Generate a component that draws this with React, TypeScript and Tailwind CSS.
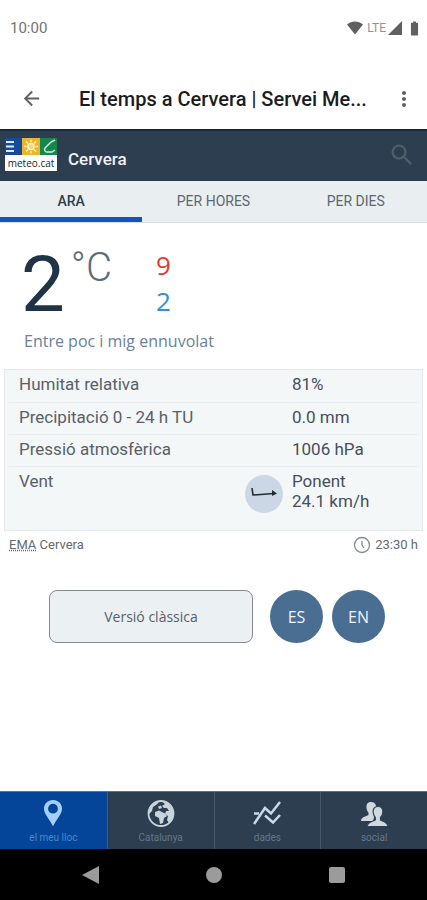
import { MdArrowBack, MdMoreVert, MdSearch, MdBatteryFull } from "react-icons/md";

const tabs = ["ARA", "PER HORES", "PER DIES"];

const readings = [
  { label: "Humitat relativa", value: "81%" },
  { label: "Precipitació 0 - 24 h TU", value: "0.0 mm" },
  { label: "Pressió atmosfèrica", value: "1006 hPa" },
];

const sections = [
  { label: "el meu lloc", icon: <PinIcon /> },
  { label: "Catalunya", icon: <GlobeIcon /> },
  { label: "dades", icon: <ChartIcon /> },
  { label: "social", icon: <PeopleIcon /> },
];

function PinIcon() {
  return (
    <svg viewBox="0 0 28 28" className="h-7 w-7" fill="#a3d0fa">
      <path
        fillRule="evenodd"
        d="M14 0C8.800 0 5 3.800 5 8.700C5 14 10.500 19 14 26.300C17.500 19 23 14 23 8.700C23 3.800 19.200 0 14 0ZM14 3.800A4.900 4.900 0 1 1 14 13.600A4.900 4.900 0 1 1 14 3.800Z"
      />
    </svg>
  );
}

function GlobeIcon() {
  return (
    <svg viewBox="0 0 28 28" className="h-7 w-7" fill="#c9d3da">
      <circle cx="14" cy="13.500" r="12.500" fill="none" stroke="#c9d3da" strokeWidth="1.800" />
      <path d="M2 10C3 6 6 3 9 1.500L12 2.500L9 5L6 7L5 11L2 14Z" />
      <path d="M15 1.500C20 1.500 25 5.500 26 11.500C27 16.500 25 20.500 22 23L20 20L21 16L18 14L19 11L22 11L20 8L17 8L15 6L18 4Z" />
      <path d="M8 12L12 10.500L15 12L18 13.500L20 16L17 18L16 23L13 24L12 18L8 16Z" />
      <path d="M11 6.500L14 5.500L15 8L12 9Z" />
    </svg>
  );
}

function ChartIcon() {
  return (
    <svg viewBox="0 0 28 28" className="h-7 w-7" fill="none" stroke="#c9d9e8" strokeWidth="2.500">
      <path d="M1 24L12 8L18 13.500L27 2" />
      <path d="M1 13.500H6M12 15.500L20 22.500L27 15" />
    </svg>
  );
}

function PeopleIcon() {
  return (
    <svg viewBox="0 0 28 28" className="h-7 w-7" fill="#d0d8de">
      <path d="M11 2C7.500 2 6 4.500 6.500 8C6.800 10 7.500 11.500 8.500 12.500V15C6 16.500 1 17 1 21H13L16 11V6C15.500 3.500 14 2 11 2Z" />
      <path
        stroke="#2c3e50"
        strokeWidth="1.200"
        d="M18 6.500C14.500 6.500 12.800 9 13.200 12.500C13.500 15 14.300 16.500 15.300 17.500V20C12.500 21.500 7.500 22 7 26.500H28C27.500 22 23 21.500 20.500 20V17.500C21.700 16.500 22.500 15 22.800 12.500C23.200 9 21.500 6.500 18 6.500Z"
      />
    </svg>
  );
}

function Logo() {
  return (
    <div className="w-[52px] bg-white">
      <svg viewBox="0 0 52 17" className="block w-full">
        <rect width="17" height="17" fill="#174a9b" />
        <path d="M1 4H9M1 8.500H9M1 13H9" stroke="#dfeaf7" strokeWidth="1.800" />
        <rect x="17" width="18" height="17" fill="#efb52a" />
        <circle cx="26" cy="8.500" r="3" fill="#f8d66c" stroke="#fff3cf" strokeWidth="1.500" />
        <path
          d="M26 1.500V4M26 13V15.500M19 8.500H21.500M30.500 8.500H33M21 3.500L23 5.500M29 11.500L31 13.500M31 3.500L29 5.500M23 11.500L21 13.500"
          stroke="#fff3cf"
          strokeWidth="1.400"
        />
        <rect x="35" width="17" height="17" fill="#12884c" />
        <path d="M50 2L46 4L40 10C39 12 40 14 42 14H47L50 12" fill="none" stroke="#d5f0dd" strokeWidth="1.500" />
      </svg>
      <p className="text-center font-['Open_Sans',sans-serif] text-[10px] leading-4 font-medium text-[#222]">
        meteo.cat
      </p>
    </div>
  );
}

function StatusBar() {
  return (
    <div className="flex h-14 items-center justify-between pr-1 pl-[10px] text-[#737373]">
      <span className="text-[15px]">10:00</span>
      <div className="flex items-center">
        <svg viewBox="0 0 16 14" className="mr-1 h-[14px] w-4" fill="#606060">
          <path d="M0 3.500C4.500-.500 11.500-.500 16 3.500L8 13.500Z" />
        </svg>
        <span className="text-xs text-[#929292]">LTE</span>
        <svg viewBox="0 0 14 14" className="mx-[2px] h-[14px] w-[14px]" fill="#606060">
          <path d="M14 0V14H0Z" />
        </svg>
        <MdBatteryFull className="ml-[2px] h-[17px] w-[17px] text-[#606060]" />
      </div>
    </div>
  );
}

function Readings() {
  return (
    <table className="w-full text-[17px] leading-5 text-[#59606a]">
      <tbody>
        {readings.map((r) => (
          <tr key={r.label} className="h-8 border-b border-[#e9edee]">
            <th scope="row" className="pb-[3px] pl-[10px] text-left font-normal">
              {r.label}
            </th>
            <td className="w-[126px] pb-[3px] text-[#464f5e]">{r.value}</td>
          </tr>
        ))}
        <tr className="h-[62px] align-top">
          <th scope="row" className="pt-1 pl-[10px] text-left font-normal">
            <div className="flex justify-between">
              Vent
              <svg viewBox="0 0 38 38" className="mt-1 mr-[9px] h-[38px] w-[38px]">
                <circle cx="19" cy="19" r="19" fill="#cbd7e5" />
                <path d="M7 13L8 20L29 18.500" fill="none" stroke="#202a32" strokeWidth="1.600" />
                <path d="M27 15L32 18.500L27 21Z" fill="#202a32" />
              </svg>
            </div>
          </th>
          <td className="w-[126px] pt-1 text-[#464f5e]">
            Ponent
            <br />
            24.1 km/h
          </td>
        </tr>
      </tbody>
    </table>
  );
}

export default function App() {
  return (
    <div className="flex min-h-screen flex-col bg-white font-[Roboto,sans-serif]">
      <StatusBar />

      <div className="flex h-[73px] items-center pt-3 pr-[11px] pl-5">
        <button aria-label="Enrere">
          <MdArrowBack className="h-[23px] w-[23px] text-[#606060]" />
        </button>
        <h1 className="ml-9 flex-1 text-xl font-medium whitespace-nowrap text-[#1c1c1c]">
          El temps a Cervera | Servei Me...
        </h1>
        <button aria-label="Més opcions">
          <MdMoreVert className="h-6 w-6 text-[#606060]" />
        </button>
      </div>

      <header className="flex h-[52px] items-center border-t-2 border-[#17293d] bg-[#2c3e50] pr-[11px] pb-[3px] pl-[5px]">
        <Logo />
        <h2 className="mt-[10px] ml-[11px] flex-1 text-[17px] font-medium text-[#eef2f5]">Cervera</h2>
        <button aria-label="Cerca">
          <MdSearch className="h-7 w-7 text-[#4f5e6c]" />
        </button>
      </header>

      <div className="grid h-[42px] grid-cols-3 border-b border-[#dce0e2] bg-[#e9eff1] text-sm">
        {tabs.map((tab, i) => (
          <button
            key={tab}
            className={
              i === 0
                ? "border-b-[5px] border-[#1253c4] pt-[3px] font-medium text-[#2c3e50]"
                : "border-b-[5px] border-transparent pt-[3px] text-[#5d6670]"
            }
          >
            {tab}
          </button>
        ))}
      </div>

      <main className="flex-1 px-1">
        <section className="pt-5">
          <div className="flex pl-[17px]">
            <p className="flex items-start">
              <span className="text-[78px] leading-[84px] text-[#203448]">2</span>
              <span className="ml-[6px] pt-[3px] text-[40px] leading-11 font-light text-[#606c7b]">°C</span>
            </p>
            <div className="ml-11 pt-1 font-['Open_Sans',sans-serif] text-[26px] leading-9">
              <p className="text-[#e23b36]">9</p>
              <p className="text-[#2a93d3]">2</p>
            </div>
          </div>
          <p className="pt-[2px] pl-5 font-['Open_Sans',sans-serif] text-base leading-6 text-[#6a7f9c]">
            Entre poc i mig ennuvolat
          </p>
        </section>

        <section className="mt-4 border border-[#e4e8e9] bg-[#f4f7f7] px-1 pb-[2px]">
          <Readings />
        </section>

        <div className="flex h-[27px] items-center justify-between px-[5px] text-[13px] text-[#636a70]">
          <span>
            <abbr title="Estació meteorològica automàtica" className="underline decoration-dotted">
              EMA
            </abbr>{" "}
            Cervera
          </span>
          <span className="flex items-center gap-1">
            <svg viewBox="0 0 18 18" className="h-[18px] w-[18px]" fill="none" stroke="#858b90" strokeWidth="1.300">
              <circle cx="9" cy="9" r="7.500" />
              <path d="M9 5V9L11 12" />
            </svg>
            23:30 h
          </span>
        </div>

        <div className="mt-8 flex pr-[38px] pl-[45px] font-['Open_Sans',sans-serif]">
          <button className="h-[53px] flex-1 rounded-lg border border-[#83898c] bg-[#ebf0f2] text-sm text-[#596067]">
            Versió clàssica
          </button>
          <button className="ml-[17px] h-[53px] w-[53px] rounded-full bg-[#4a6d92] text-base text-[#edf3f8]">
            ES
          </button>
          <button className="ml-[9px] h-[53px] w-[53px] rounded-full bg-[#4a6d92] text-base text-[#edf3f8]">
            EN
          </button>
        </div>
      </main>

      <nav className="grid h-[58px] grid-cols-4 border-t border-[#60717f] bg-[#2c3e50]">
        {sections.map((s, i) => (
          <a
            key={s.label}
            href="#"
            className={
              i === 0
                ? "flex flex-col items-center bg-[#04459a] pt-2 text-[10px] leading-5 text-[#4a86ca]"
                : "flex flex-col items-center border-l border-[#465a69] pt-2 text-[10px] leading-5 text-[#667789]"
            }
          >
            {s.icon}
            {s.label}
          </a>
        ))}
      </nav>

      <div className="flex h-[51px] items-center justify-between bg-black pr-[82px] pl-[82px]">
        <button aria-label="Torna">
          <svg viewBox="0 0 17 18" className="h-[18px] w-[17px]" fill="#9b9b9b">
            <path d="M17 0V18L0 9Z" />
          </svg>
        </button>
        <button aria-label="Inici" className="h-4 w-4 rounded-full bg-[#9b9b9b]" />
        <button aria-label="Recents" className="h-4 w-4 rounded-xs bg-[#9b9b9b]" />
      </div>
    </div>
  );
}
